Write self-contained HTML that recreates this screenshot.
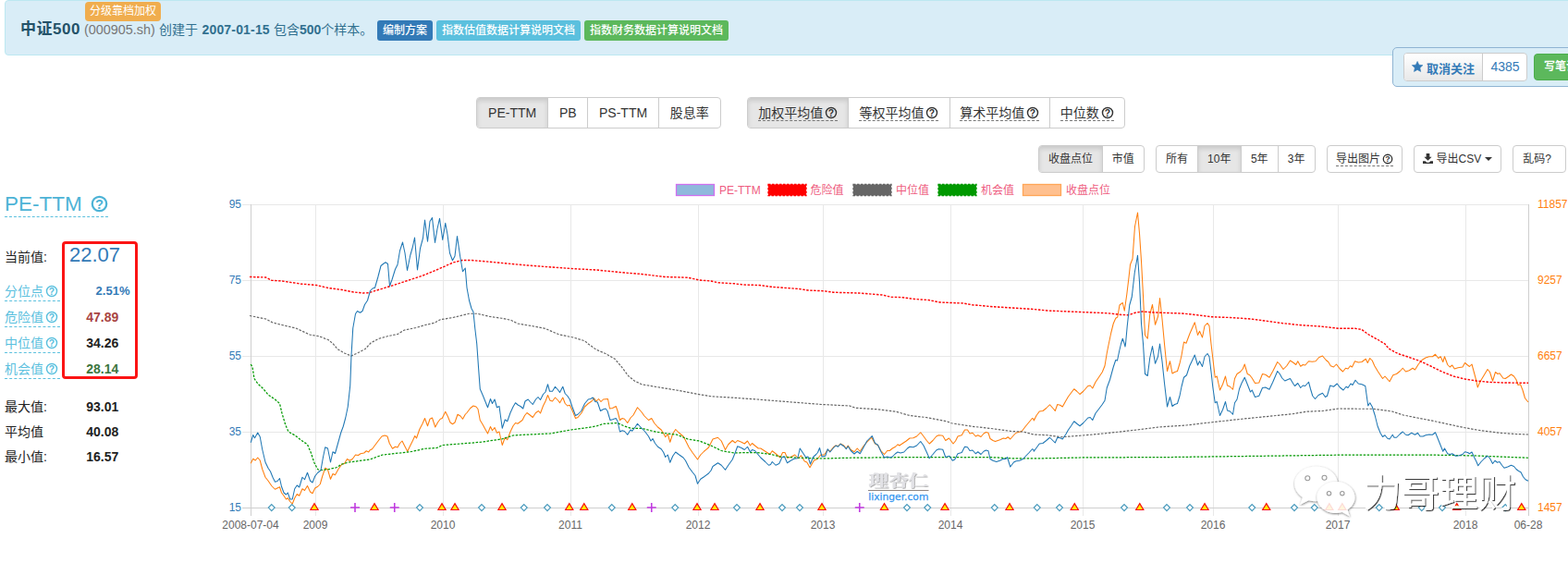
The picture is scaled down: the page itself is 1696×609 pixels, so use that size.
<!DOCTYPE html><html lang="zh"><head><meta charset="utf-8"><title>中证500 PE-TTM</title><style>
*{box-sizing:border-box;margin:0;padding:0}
html,body{width:1696px;height:609px;overflow:hidden;background:#fff}
body{font-family:"Liberation Sans","Noto Sans CJK SC",sans-serif;font-size:14px;color:#333;position:relative}
.abs{position:absolute;white-space:nowrap}
#hdr{left:5px;top:0px;width:1720px;height:60px;background:#d9edf7;border:1px solid #bce8f1;border-radius:4px}
.lbl{position:absolute;height:22px;line-height:22.5px;border-radius:3px;color:#fff;font-weight:500;font-size:12px;text-align:center;white-space:nowrap;top:22px}
.t{position:absolute;white-space:nowrap;line-height:20px;top:22px;font-size:14px;color:#31708f}
.bg{position:absolute;display:flex;border:1px solid #ccc;border-radius:4px;background:#fff;overflow:hidden}
.bg div{height:100%;text-align:center;color:#333;border-right:1px solid #ccc;white-space:nowrap}
.bg div:last-child{border-right:none}
.bg div.on{background:#e6e6e6;box-shadow:inset 0 3px 5px rgba(0,0,0,.125)}
.big div{font-size:14px;line-height:32px}
.sm div{font-size:12px;line-height:28.6px}
.q{display:inline-block;vertical-align:-2px;margin-left:2px}
.du{border-bottom:1px dashed #777;padding-bottom:0px}
.row{position:absolute;left:5px;white-space:nowrap;font-size:14px;line-height:20px;color:#222}
.row.l{color:#5bc0de}
.val{position:absolute;white-space:nowrap;font-size:14px;line-height:20px;font-weight:bold;color:#222}
</style></head><body>
<div class="abs" id="hdr"></div>
<div class="lbl" style="left:92px;top:2px;width:82px;height:21px;line-height:20px;background:#f0ad4e;font-weight:normal;border-radius:4px">分级靠档加权</div>
<div class="t" style="left:22px;font-size:17px;font-weight:bold;color:#245269;top:22px;letter-spacing:0.5px">中证500</div>
<div class="t" style="left:91px;color:#777;font-size:14.4px">(000905.sh)</div>
<div class="t" style="left:172px">创建于</div>
<div class="t" style="left:218.5px;font-weight:bold;letter-spacing:0.17px">2007-01-15</div>
<div class="t" style="left:296px">包含<b>500</b>个样本。</div>
<div class="lbl" style="left:408px;width:60px;background:#337ab7">编制方案</div>
<div class="lbl" style="left:472px;width:156px;background:#5bc0de">指数估值数据计算说明文档</div>
<div class="lbl" style="left:632px;width:156px;background:#5cb85c">指数财务数据计算说明文档</div>
<div class="abs" style="left:1506px;top:51px;width:220px;height:43px;background:#d9edf7;border:1px solid #8fb4d3;border-radius:5px"></div>
<div class="abs" style="left:1518px;top:57px;width:134px;height:31px;border:1px solid #ccc;border-radius:4px;background:#fff;overflow:hidden"><div style="position:absolute;left:0;top:0;width:85px;height:100%;background:linear-gradient(#fff,#e8e8e8);border-right:1px solid #ccc"></div><svg style="position:absolute;left:7.900px;top:8px" width="12.200" height="12.200" viewBox="0 0 24 24"><path fill="#337ab7" stroke="#337ab7" stroke-width="1.200" stroke-linejoin="round" d="M12.00 0.80 L15.35 8.19 L23.41 9.09 L17.42 14.56 L19.05 22.51 L12.00 18.50 L4.95 22.51 L6.58 14.56 L0.59 9.09 L8.65 8.19z"/></svg><div style="position:absolute;left:24px;top:6.500px;line-height:20px;font-size:13px;font-weight:bold;color:#337ab7">取消关注</div><div style="position:absolute;left:85px;width:48px;top:4px;line-height:20px;font-size:14px;color:#337ab7;text-align:center">4385</div></div>
<div class="abs" style="left:1659px;top:58px;width:60px;height:29px;background:#5cb85c;border:1px solid #4cae4c;border-radius:4px;color:#fff;font-size:12px;font-weight:bold;line-height:27px;padding-left:10px">写笔记</div>
<div class="bg big" style="left:515.3px;top:105.0px;width:264.7px;height:34.0px"><div style="width:76.7px" class="on">PE-TTM</div><div style="width:43.5px" class="">PB</div><div style="width:76.2px" class="">PS-TTM</div><div style="width:66.3px" class="">股息率</div></div>
<div class="bg big" style="left:808.3px;top:105.0px;width:408.4px;height:34.0px"><div style="width:109.0px" class="on"><span class="du">加权平均值<svg class="q" width="14" height="14" viewBox="0 0 16 16"><circle cx="8" cy="8" r="6.3" fill="none" stroke="#333" stroke-width="1.65"/><text x="8" y="12.1" text-anchor="middle" font-family="Liberation Sans, sans-serif" font-weight="bold" font-size="11.8" fill="#333">?</text></svg></span></div><div style="width:109.4px" class=""><span class="du">等权平均值<svg class="q" width="14" height="14" viewBox="0 0 16 16"><circle cx="8" cy="8" r="6.3" fill="none" stroke="#333" stroke-width="1.65"/><text x="8" y="12.1" text-anchor="middle" font-family="Liberation Sans, sans-serif" font-weight="bold" font-size="11.8" fill="#333">?</text></svg></span></div><div style="width:108.0px" class=""><span class="du">算术平均值<svg class="q" width="14" height="14" viewBox="0 0 16 16"><circle cx="8" cy="8" r="6.3" fill="none" stroke="#333" stroke-width="1.65"/><text x="8" y="12.1" text-anchor="middle" font-family="Liberation Sans, sans-serif" font-weight="bold" font-size="11.8" fill="#333">?</text></svg></span></div><div style="width:80.0px" class=""><span class="du">中位数<svg class="q" width="14" height="14" viewBox="0 0 16 16"><circle cx="8" cy="8" r="6.3" fill="none" stroke="#333" stroke-width="1.65"/><text x="8" y="12.1" text-anchor="middle" font-family="Liberation Sans, sans-serif" font-weight="bold" font-size="11.8" fill="#333">?</text></svg></span></div></div>
<div class="bg sm" style="left:1123.3px;top:157.0px;width:114.5px;height:30.0px"><div style="width:68.5px" class="on">收盘点位</div><div style="width:44.0px" class="">市值</div></div>
<div class="bg sm" style="left:1250.3px;top:157.0px;width:172.5px;height:30.0px"><div style="width:44.3px" class="">所有</div><div style="width:47.4px" class="on">10年</div><div style="width:39.6px" class="">5年</div><div style="width:39.2px" class="">3年</div></div>
<div class="bg sm" style="left:1435.2px;top:157.0px;width:81.4px;height:30.0px"><div style="width:79.4px" class=""><span class="du">导出图片<svg class="q" width="12" height="12" viewBox="0 0 16 16"><circle cx="8" cy="8" r="6.3" fill="none" stroke="#333" stroke-width="1.75"/><text x="8" y="12.1" text-anchor="middle" font-family="Liberation Sans, sans-serif" font-weight="bold" font-size="11.8" fill="#333">?</text></svg></span></div></div>
<div class="bg sm" style="left:1529.0px;top:157.0px;width:94.7px;height:30.0px"><div style="width:92.7px" class=""><svg width="11" height="11" viewBox="0 0 12 12" style="vertical-align:-1px"><path fill="#333" d="M4 0h4v4h2.500L6 8.500 1.500 4H4zM0 9h3l1.500 1.500h3L9 9h3v3H0z"/></svg> 导出CSV <span style="display:inline-block;border-top:4px solid #333;border-left:4px solid transparent;border-right:4px solid transparent;vertical-align:2px"></span></div></div>
<div class="bg sm" style="left:1636.2px;top:157.0px;width:57.8px;height:30.0px"><div style="width:55.8px" class=""><span style="margin-left:-5px">乱码?</span></div></div>
<div class="abs" style="left:5px;top:207.5px;font-size:22.5px;line-height:26px;color:#4db3d6;border-bottom:1px dashed #5bc0de;width:112px">PE-TTM<svg class="q" style="vertical-align:-2.5px;margin-left:9px" width="19" height="19" viewBox="0 0 16 16"><circle cx="8" cy="8" r="6.500" fill="none" stroke="#4db3d6" stroke-width="1.900"/><text x="8" y="12.300" text-anchor="middle" font-family="Liberation Sans, sans-serif" font-weight="bold" font-size="12.400" fill="#4db3d6">?</text></svg></div>
<div class="abs" style="left:67px;top:261px;width:82px;height:148.5px;border:3px solid #fb1414;border-radius:4px"></div>
<div class="row" style="top:268px">当前值:</div>
<div class="val" style="left:75px;top:263px;font-size:22px;font-weight:normal;color:#337ab7;line-height:26px">22.07</div>
<div class="row l" style="top:305px;border-bottom:1px dashed #5bc0de;width:60px;height:21px">分位点<svg class="q" width="14" height="14" viewBox="0 0 16 16"><circle cx="8" cy="8" r="6.3" fill="none" stroke="#5bc0de" stroke-width="1.65"/><text x="8" y="12.1" text-anchor="middle" font-family="Liberation Sans, sans-serif" font-weight="bold" font-size="11.8" fill="#5bc0de">?</text></svg></div>
<div class="val" style="left:103.6px;top:305px;color:#337ab7;font-size:13px">2.51%</div>
<div class="row l" style="top:333px;border-bottom:1px dashed #5bc0de;width:60px;height:21px">危险值<svg class="q" width="14" height="14" viewBox="0 0 16 16"><circle cx="8" cy="8" r="6.3" fill="none" stroke="#5bc0de" stroke-width="1.65"/><text x="8" y="12.1" text-anchor="middle" font-family="Liberation Sans, sans-serif" font-weight="bold" font-size="11.8" fill="#5bc0de">?</text></svg></div>
<div class="val" style="left:93.3px;top:333px;color:#a94442">47.89</div>
<div class="row l" style="top:361px;border-bottom:1px dashed #5bc0de;width:60px;height:21px">中位值<svg class="q" width="14" height="14" viewBox="0 0 16 16"><circle cx="8" cy="8" r="6.3" fill="none" stroke="#5bc0de" stroke-width="1.65"/><text x="8" y="12.1" text-anchor="middle" font-family="Liberation Sans, sans-serif" font-weight="bold" font-size="11.8" fill="#5bc0de">?</text></svg></div>
<div class="val" style="left:93.3px;top:361px;color:#222">34.26</div>
<div class="row l" style="top:389px;border-bottom:1px dashed #5bc0de;width:60px;height:21px">机会值<svg class="q" width="14" height="14" viewBox="0 0 16 16"><circle cx="8" cy="8" r="6.3" fill="none" stroke="#5bc0de" stroke-width="1.65"/><text x="8" y="12.1" text-anchor="middle" font-family="Liberation Sans, sans-serif" font-weight="bold" font-size="11.8" fill="#5bc0de">?</text></svg></div>
<div class="val" style="left:93.3px;top:389px;color:#3c763d">28.14</div>
<div class="row" style="top:430px">最大值:</div>
<div class="val" style="left:93.3px;top:430px">93.01</div>
<div class="row" style="top:457px">平均值</div>
<div class="val" style="left:93.3px;top:457px">40.08</div>
<div class="row" style="top:484px">最小值:</div>
<div class="val" style="left:93.3px;top:484px">16.57</div>
<svg class="abs" style="left:0;top:0" width="1696" height="609" viewBox="0 0 1696 609" font-family="Liberation Sans, Noto Sans CJK SC, sans-serif" font-size="12">
<rect x="731.5" y="199.5" width="41" height="12" fill="#8fb9dc" stroke="#d070f0" stroke-width="1.3"/>
<text x="778" y="209.5" fill="#ee5c80">PE-TTM</text>
<rect x="831" y="199.5" width="41" height="12" fill="#ff0000" stroke="#ff0000" stroke-width="1.3" stroke-dasharray="2.5 1.5"/>
<text x="876.5" y="209.5" fill="#ee5c80">危险值</text>
<rect x="923" y="199.5" width="41" height="12" fill="#666666" stroke="#666666" stroke-width="1.3" stroke-dasharray="2.5 1.5"/>
<text x="969" y="209.5" fill="#ee5c80">中位值</text>
<rect x="1015" y="199.5" width="41" height="12" fill="#009900" stroke="#009900" stroke-width="1.3" stroke-dasharray="2.5 1.5"/>
<text x="1061" y="209.5" fill="#ee5c80">机会值</text>
<rect x="1106.5" y="199.5" width="41" height="12" fill="#ffc08f" stroke="#ffa657" stroke-width="1.3"/>
<text x="1153" y="209.5" fill="#ee5c80">收盘点位</text>
<line x1="341.5" y1="221" x2="341.5" y2="558" stroke="#e8e8e8" stroke-width="1"/>
<line x1="479.5" y1="221" x2="479.5" y2="558" stroke="#e8e8e8" stroke-width="1"/>
<line x1="617.5" y1="221" x2="617.5" y2="558" stroke="#e8e8e8" stroke-width="1"/>
<line x1="755.5" y1="221" x2="755.5" y2="558" stroke="#e8e8e8" stroke-width="1"/>
<line x1="890.5" y1="221" x2="890.5" y2="558" stroke="#e8e8e8" stroke-width="1"/>
<line x1="1028.5" y1="221" x2="1028.5" y2="558" stroke="#e8e8e8" stroke-width="1"/>
<line x1="1171.5" y1="221" x2="1171.5" y2="558" stroke="#e8e8e8" stroke-width="1"/>
<line x1="1312.5" y1="221" x2="1312.5" y2="558" stroke="#e8e8e8" stroke-width="1"/>
<line x1="1447.5" y1="221" x2="1447.5" y2="558" stroke="#e8e8e8" stroke-width="1"/>
<line x1="1585.5" y1="221" x2="1585.5" y2="558" stroke="#e8e8e8" stroke-width="1"/>
<line x1="262" y1="221.5" x2="1653" y2="221.5" stroke="#e8e8e8" stroke-width="1"/>
<line x1="262" y1="303.5" x2="1653" y2="303.5" stroke="#e8e8e8" stroke-width="1"/>
<line x1="262" y1="385.5" x2="1653" y2="385.5" stroke="#e8e8e8" stroke-width="1"/>
<line x1="262" y1="467.5" x2="1653" y2="467.5" stroke="#e8e8e8" stroke-width="1"/>
<line x1="262" y1="549.5" x2="1653" y2="549.5" stroke="#e8e8e8" stroke-width="1"/>
<line x1="271.5" y1="221" x2="271.5" y2="558" stroke="#cfcfcf" stroke-width="1"/>
<line x1="262" y1="549.5" x2="1653" y2="549.5" stroke="#cfcfcf" stroke-width="1"/>
<line x1="1653.5" y1="221" x2="1653.5" y2="558" stroke="#cfcfcf" stroke-width="1"/>
<text x="261" y="225" text-anchor="end" fill="#337ab7">95</text>
<text x="1663" y="225" fill="#ff7f0e">11857</text>
<text x="261" y="307" text-anchor="end" fill="#337ab7">75</text>
<text x="1663" y="307" fill="#ff7f0e">9257</text>
<text x="261" y="389" text-anchor="end" fill="#337ab7">55</text>
<text x="1663" y="389" fill="#ff7f0e">6657</text>
<text x="261" y="471" text-anchor="end" fill="#337ab7">35</text>
<text x="1663" y="471" fill="#ff7f0e">4057</text>
<text x="261" y="553" text-anchor="end" fill="#337ab7">15</text>
<text x="1663" y="553" fill="#ff7f0e">1457</text>
<text x="271" y="571.5" text-anchor="middle" fill="#666">2008-07-04</text>
<text x="341" y="571.5" text-anchor="middle" fill="#666">2009</text>
<text x="479" y="571.5" text-anchor="middle" fill="#666">2010</text>
<text x="617" y="571.5" text-anchor="middle" fill="#666">2011</text>
<text x="755" y="571.5" text-anchor="middle" fill="#666">2012</text>
<text x="890" y="571.5" text-anchor="middle" fill="#666">2013</text>
<text x="1028" y="571.5" text-anchor="middle" fill="#666">2014</text>
<text x="1171" y="571.5" text-anchor="middle" fill="#666">2015</text>
<text x="1312" y="571.5" text-anchor="middle" fill="#666">2016</text>
<text x="1447" y="571.5" text-anchor="middle" fill="#666">2017</text>
<text x="1585" y="571.5" text-anchor="middle" fill="#666">2018</text>
<text x="1653" y="571.5" text-anchor="middle" fill="#666">06-28</text>
<path d="M271.25 501.25 L273.75 496.25 L276.25 498.00 L278.75 495.00 L281.25 498.00 L283.75 507.50 L287.00 516.25 L290.00 520.00 L293.75 525.50 L297.50 529.25 L300.00 528.00 L302.50 526.75 L304.50 533.00 L307.00 536.25 L309.50 540.00 L311.25 538.75 L313.75 542.50 L316.25 545.00 L318.75 538.75 L321.25 534.50 L323.75 536.25 L327.00 528.75 L329.50 530.50 L332.50 525.50 L335.50 532.00 L338.00 533.75 L340.75 528.00 L343.75 526.25 L346.25 523.75 L348.75 515.00 L351.75 506.25 L354.50 508.00 L357.50 518.25 L360.00 512.50 L362.50 513.75 L366.25 507.00 L370.00 502.00 L372.50 501.50 L375.50 496.50 L378.25 498.25 L381.25 496.50 L384.50 492.00 L387.50 492.50 L390.00 490.75 L393.75 490.00 L396.25 487.75 L398.75 489.00 L400.00 487.00 L402.50 485.75 L406.25 480.75 L410.00 475.75 L413.00 472.00 L416.25 471.00 L419.00 472.00 L421.25 479.50 L424.50 485.25 L427.50 483.25 L430.00 484.00 L432.50 479.50 L435.00 477.00 L437.50 482.00 L440.75 488.25 L443.75 482.00 L446.25 477.00 L448.75 471.50 L450.50 474.00 L453.75 464.50 L457.00 458.25 L459.50 452.50 L462.50 460.75 L465.00 453.25 L467.50 452.00 L470.75 462.00 L473.75 456.50 L476.25 453.25 L478.25 452.50 L481.75 445.25 L484.50 450.75 L487.00 457.00 L489.50 458.75 L492.00 457.00 L495.00 448.25 L498.00 450.00 L500.50 453.25 L503.25 448.25 L505.00 446.50 L508.75 441.50 L512.00 439.00 L515.00 440.00 L517.00 442.50 L519.25 454.50 L522.00 459.00 L525.00 464.50 L527.50 469.00 L530.50 461.50 L532.50 465.75 L535.00 462.50 L537.50 468.25 L540.00 467.00 L543.25 481.50 L546.25 473.25 L548.75 475.75 L552.00 467.00 L555.00 460.75 L557.50 457.50 L560.00 458.25 L565.00 454.50 L567.50 449.50 L570.00 446.50 L573.25 449.00 L576.25 451.50 L579.50 446.50 L582.50 444.50 L584.50 447.00 L587.50 439.00 L590.00 434.00 L592.50 427.50 L595.00 433.25 L597.50 434.00 L600.50 430.00 L603.75 433.25 L605.50 435.75 L608.75 430.00 L611.25 436.50 L613.75 439.00 L616.25 438.25 L618.75 443.25 L622.50 452.50 L625.00 451.50 L628.75 447.00 L632.50 440.00 L636.25 436.50 L640.00 434.00 L642.50 430.75 L645.00 434.00 L647.50 431.50 L650.00 434.50 L652.50 432.00 L657.50 431.50 L659.50 442.00 L662.50 441.50 L666.25 439.50 L668.00 444.50 L670.50 454.50 L673.00 452.50 L675.50 453.25 L678.75 457.50 L682.00 452.00 L685.00 449.00 L689.50 440.75 L694.00 445.75 L697.00 450.00 L701.50 454.50 L704.75 452.50 L707.75 457.75 L711.50 462.00 L715.25 465.00 L717.75 469.00 L719.75 472.75 L722.25 469.50 L724.75 478.25 L727.75 469.00 L730.75 464.50 L734.00 467.75 L739.00 472.00 L741.50 476.50 L745.25 484.00 L749.00 489.50 L754.50 497.00 L757.75 492.00 L761.50 488.25 L766.50 484.00 L771.00 475.00 L776.50 473.25 L780.25 477.00 L784.50 486.50 L787.75 480.75 L792.25 476.50 L795.25 479.00 L797.75 476.50 L802.00 478.25 L805.25 480.00 L808.50 477.00 L811.50 482.00 L813.50 479.50 L816.50 482.00 L820.25 485.00 L822.75 485.00 L827.75 488.25 L832.75 491.50 L835.25 487.75 L839.00 490.75 L844.00 495.00 L846.50 489.50 L849.00 489.50 L851.50 495.25 L855.25 494.50 L859.75 492.00 L863.50 495.75 L866.50 492.75 L870.25 499.00 L872.75 500.00 L876.00 505.75 L880.25 498.25 L884.00 496.50 L887.75 492.00 L891.50 492.00 L895.25 486.50 L897.75 488.25 L901.50 483.75 L904.00 482.00 L906.50 482.50 L909.00 480.00 L912.75 482.00 L915.25 485.00 L917.25 482.00 L920.25 486.50 L924.00 488.75 L927.25 485.00 L930.25 488.25 L934.00 482.50 L937.75 478.25 L942.75 473.25 L946.50 480.00 L949.50 481.50 L952.75 487.50 L956.50 491.50 L959.75 487.50 L962.25 487.50 L965.25 485.00 L968.50 483.25 L971.00 480.75 L972.75 482.00 L976.50 479.50 L980.25 477.00 L984.00 474.00 L987.75 473.75 L991.50 472.00 L995.75 467.75 L999.00 472.00 L1002.25 476.50 L1005.25 480.00 L1009.00 476.50 L1012.75 472.00 L1015.25 470.75 L1019.75 471.25 L1022.75 476.50 L1026.50 474.00 L1031.00 480.00 L1033.50 477.00 L1036.00 472.00 L1040.25 470.75 L1043.50 465.00 L1046.50 465.00 L1049.00 469.00 L1052.00 468.25 L1055.25 472.00 L1057.75 470.75 L1061.00 472.50 L1064.00 469.00 L1066.50 467.50 L1069.00 468.25 L1071.00 474.50 L1074.00 476.50 L1076.50 477.50 L1081.50 475.75 L1085.25 474.00 L1087.75 474.50 L1090.25 472.75 L1092.75 475.00 L1096.50 470.75 L1099.00 468.25 L1105.25 466.50 L1109.00 461.50 L1112.75 457.00 L1116.50 452.50 L1118.00 453.25 L1118.25 455.00 L1121.00 449.50 L1124.25 445.00 L1128.00 444.50 L1131.75 441.50 L1135.50 437.75 L1139.25 442.00 L1141.25 444.50 L1143.75 437.50 L1146.75 438.25 L1149.25 440.00 L1153.00 433.25 L1155.50 429.00 L1158.50 425.00 L1161.75 420.75 L1164.75 423.25 L1168.00 426.50 L1171.75 423.25 L1176.75 417.50 L1179.25 417.00 L1181.75 420.00 L1185.00 413.25 L1189.25 407.00 L1192.25 402.50 L1195.00 395.75 L1197.25 382.00 L1199.25 372.00 L1201.75 360.00 L1204.25 350.00 L1206.75 344.25 L1208.75 343.00 L1211.00 330.00 L1214.25 327.50 L1216.25 336.25 L1218.75 318.75 L1221.00 300.00 L1222.50 286.25 L1225.00 280.00 L1227.50 245.00 L1230.50 230.00 L1232.50 252.50 L1234.50 282.50 L1236.50 320.00 L1238.50 362.50 L1241.25 366.25 L1243.75 340.00 L1246.50 329.50 L1249.50 351.25 L1252.50 342.50 L1254.50 322.50 L1257.00 345.00 L1259.50 372.00 L1261.00 387.00 L1262.50 401.50 L1265.50 390.75 L1268.00 404.00 L1270.50 402.50 L1273.50 401.50 L1276.00 393.25 L1278.00 384.50 L1280.50 370.00 L1283.00 371.25 L1286.75 361.25 L1289.50 355.00 L1292.25 348.75 L1295.50 362.50 L1297.50 358.25 L1300.50 365.00 L1303.00 352.50 L1306.00 349.50 L1308.00 352.50 L1310.00 372.00 L1311.75 387.00 L1314.25 408.25 L1316.25 407.00 L1319.50 422.00 L1322.50 415.75 L1325.50 407.00 L1327.50 417.00 L1330.50 418.25 L1333.50 421.25 L1335.50 409.50 L1338.00 404.50 L1341.75 402.00 L1344.25 399.00 L1346.25 394.00 L1349.25 404.50 L1351.75 405.75 L1354.25 409.00 L1357.50 414.50 L1361.75 414.00 L1365.50 404.50 L1368.75 405.25 L1373.00 408.25 L1376.75 401.50 L1381.75 391.50 L1384.25 394.00 L1388.00 399.50 L1391.75 395.75 L1395.50 390.00 L1399.25 392.50 L1401.75 394.50 L1403.75 390.75 L1406.75 396.25 L1409.25 394.50 L1411.75 395.00 L1415.50 390.75 L1419.25 391.25 L1423.00 390.75 L1426.75 386.50 L1430.50 385.00 L1434.25 389.50 L1436.75 391.50 L1439.25 395.75 L1442.50 397.00 L1445.50 394.00 L1449.25 399.00 L1452.50 402.00 L1455.50 398.25 L1458.00 399.00 L1460.50 395.75 L1462.50 397.00 L1465.50 390.75 L1469.25 392.00 L1473.00 391.50 L1477.25 388.25 L1479.25 392.50 L1481.75 387.50 L1484.25 390.00 L1486.75 395.75 L1490.50 402.00 L1495.50 409.50 L1498.00 407.00 L1503.00 412.75 L1506.75 405.75 L1510.50 404.50 L1514.25 401.50 L1517.25 398.25 L1520.50 402.00 L1524.25 400.75 L1528.00 398.25 L1530.50 400.00 L1534.25 394.00 L1538.00 389.50 L1542.00 387.00 L1545.75 385.75 L1549.50 385.75 L1552.50 383.25 L1555.75 387.50 L1558.25 385.75 L1560.75 391.50 L1562.50 385.75 L1565.75 394.50 L1568.25 397.00 L1570.75 395.00 L1573.25 399.00 L1577.00 397.75 L1582.00 397.00 L1584.50 392.50 L1587.50 395.00 L1589.50 396.50 L1592.00 394.00 L1594.50 403.25 L1596.50 410.75 L1598.25 419.00 L1600.75 413.25 L1604.50 407.00 L1609.00 399.50 L1611.50 402.50 L1614.50 412.00 L1617.50 402.50 L1620.00 404.50 L1622.00 403.75 L1625.75 409.00 L1628.25 409.50 L1632.00 407.00 L1634.50 405.00 L1637.50 407.00 L1640.00 410.75 L1642.00 416.50 L1644.50 415.75 L1647.00 422.00 L1649.50 430.75 L1653.00 435.00" fill="none" stroke="#ff7f0e" stroke-width="1.05" stroke-linejoin="round"/>
<path d="M271.25 394.00 L273.00 397.00 L275.00 409.50 L278.75 415.00 L285.00 420.75 L290.00 427.00 L297.50 432.00 L302.50 436.50 L305.00 447.00 L308.75 459.50 L312.00 467.00 L318.75 470.75 L326.25 476.50 L332.50 480.75 L336.25 489.50 L340.00 500.75 L343.75 507.75 L347.50 508.50 L356.25 507.50 L363.75 505.75 L370.00 502.00 L377.50 500.00 L400.00 497.00 L413.75 492.00 L432.50 490.00 L445.00 488.50 L460.00 485.25 L472.50 484.50 L478.75 481.50 L495.00 480.25 L520.00 478.25 L542.50 475.00 L555.00 471.00 L572.50 470.00 L595.00 469.00 L617.50 465.00 L632.50 463.00 L645.00 461.00 L652.50 458.50 L667.50 457.50 L675.00 460.75 L682.50 463.25 L694.00 463.25 L706.50 466.50 L719.00 468.75 L731.50 470.00 L744.00 475.00 L756.50 477.00 L769.00 482.00 L780.25 487.50 L794.00 490.00 L806.50 489.50 L819.00 489.50 L834.00 491.50 L844.00 494.00 L864.00 495.25 L889.00 496.00 L919.00 495.25 L944.00 495.00 L994.00 494.50 L1044.00 494.75 L1069.00 494.50 L1094.00 495.75 L1118.00 496.00 L1168.00 495.00 L1268.00 494.50 L1368.00 493.25 L1443.00 492.25 L1542.00 492.00 L1572.00 492.50 L1597.00 493.00 L1622.00 494.00 L1653.00 495.25" fill="none" stroke="#009900" stroke-width="1.25" stroke-linejoin="round" stroke-dasharray="2.5 1.5"/>
<path d="M270.00 341.50 L287.50 345.00 L295.00 349.00 L305.00 351.50 L320.00 355.00 L335.00 362.00 L345.00 363.75 L355.00 367.50 L360.00 371.50 L365.00 377.50 L372.50 382.00 L380.00 385.00 L387.50 381.50 L395.00 377.50 L401.25 370.75 L410.00 366.25 L420.00 363.50 L430.00 361.50 L437.50 357.00 L450.00 354.50 L460.00 351.50 L470.00 349.25 L476.25 345.75 L490.00 343.50 L500.00 341.00 L507.50 339.25 L516.25 339.25 L530.00 342.50 L542.50 344.25 L552.50 346.25 L560.00 350.00 L577.50 353.00 L590.00 355.50 L605.00 362.00 L620.00 365.00 L632.50 368.75 L636.25 372.00 L645.00 378.25 L655.00 382.50 L665.00 388.25 L672.50 397.00 L680.00 407.00 L686.25 412.00 L694.00 415.75 L711.50 418.75 L731.50 422.00 L754.00 426.25 L769.00 428.75 L794.00 430.25 L819.00 432.00 L856.50 435.00 L889.00 437.50 L919.00 439.00 L925.25 441.25 L949.00 442.75 L969.00 445.25 L984.00 449.50 L1001.50 451.50 L1024.00 455.75 L1029.00 457.75 L1051.50 461.25 L1074.00 463.75 L1094.00 466.50 L1106.50 467.00 L1118.00 470.00 L1133.00 470.75 L1148.00 472.75 L1168.00 471.25 L1193.00 469.00 L1223.00 465.75 L1253.00 462.00 L1283.00 460.00 L1313.00 456.50 L1343.00 453.25 L1373.00 450.25 L1398.00 447.75 L1413.00 445.25 L1430.50 444.50 L1448.00 442.00 L1468.00 442.25 L1485.50 442.25 L1505.50 445.00 L1518.00 449.00 L1533.00 452.00 L1542.00 453.75 L1552.00 455.75 L1567.00 459.00 L1584.50 462.75 L1602.00 465.75 L1622.00 468.25 L1639.50 469.50 L1653.00 470.00" fill="none" stroke="#666666" stroke-width="1.2" stroke-linejoin="round" stroke-dasharray="2.5 1.5"/>
<path d="M270.00 299.50 L287.50 300.00 L293.75 303.25 L305.00 304.00 L325.00 307.00 L342.50 308.50 L355.00 311.50 L370.00 313.50 L382.50 316.00 L392.50 317.00 L398.75 316.75 L410.00 313.25 L422.50 309.50 L440.00 303.75 L457.50 298.00 L475.00 290.75 L490.00 284.00 L500.00 281.50 L510.00 281.50 L532.50 283.50 L570.00 287.00 L617.50 290.50 L645.00 292.00 L670.00 294.50 L694.00 296.50 L719.00 299.50 L744.00 300.25 L756.50 303.00 L769.00 304.00 L776.50 305.75 L794.00 306.75 L804.00 308.00 L821.50 308.50 L834.00 310.25 L864.00 312.50 L874.00 314.00 L891.50 314.75 L901.50 316.25 L929.00 317.00 L954.00 319.00 L964.00 321.25 L976.50 321.75 L989.00 323.50 L1004.00 324.50 L1016.50 327.00 L1041.50 328.00 L1051.50 329.75 L1074.00 331.75 L1094.00 333.00 L1118.00 334.50 L1133.00 336.00 L1168.00 337.50 L1198.00 338.75 L1213.00 340.50 L1220.50 340.75 L1228.00 338.25 L1235.50 337.00 L1248.00 338.00 L1278.00 339.00 L1293.00 340.50 L1310.50 342.75 L1330.50 343.50 L1353.00 345.00 L1368.00 347.00 L1388.00 349.75 L1408.00 351.75 L1428.00 353.00 L1448.00 355.25 L1465.50 355.25 L1473.00 356.50 L1480.50 362.00 L1490.50 367.50 L1498.00 372.00 L1502.00 377.00 L1512.00 382.50 L1522.00 385.75 L1534.50 390.00 L1547.00 395.75 L1559.50 402.00 L1572.00 407.00 L1584.50 410.00 L1597.00 412.00 L1609.50 413.25 L1627.00 414.00 L1653.00 414.25" fill="none" stroke="#ff0000" stroke-width="1.4" stroke-linejoin="round" stroke-dasharray="2.5 1.5"/>
<path d="M271.25 478.75 L273.75 470.50 L275.50 473.75 L278.75 468.00 L281.25 472.50 L283.75 486.25 L287.00 500.00 L290.00 506.25 L292.50 510.00 L295.00 516.25 L297.50 521.25 L300.00 520.50 L302.50 517.50 L304.50 526.25 L307.00 533.00 L309.50 535.00 L311.25 533.00 L313.75 540.00 L316.25 540.00 L318.75 528.75 L321.25 525.00 L323.75 527.00 L327.00 516.25 L329.50 518.75 L332.50 511.25 L335.50 520.00 L338.00 522.00 L340.75 515.00 L343.75 511.25 L347.00 508.75 L349.50 494.50 L351.75 483.75 L354.50 485.00 L357.50 500.00 L360.00 488.75 L362.50 490.50 L366.25 477.00 L368.75 468.00 L371.25 461.25 L373.75 452.00 L376.25 440.00 L378.75 417.00 L380.00 384.50 L380.75 372.00 L381.75 355.00 L384.50 339.50 L386.50 336.50 L389.50 338.25 L392.00 336.50 L394.50 329.50 L397.50 325.00 L400.50 314.50 L403.00 312.00 L405.50 311.25 L408.75 300.00 L412.00 287.50 L414.50 285.50 L417.00 283.75 L419.50 285.50 L421.50 309.50 L424.00 302.50 L427.50 291.25 L430.00 286.25 L432.50 271.25 L435.50 262.00 L438.00 273.75 L440.50 292.50 L443.75 276.25 L446.25 267.50 L448.50 257.00 L451.50 292.00 L454.50 268.75 L457.50 257.50 L459.50 238.00 L462.50 261.25 L465.00 239.50 L467.50 235.50 L470.50 262.50 L473.00 247.50 L475.50 236.25 L478.75 259.50 L481.75 241.25 L484.00 253.75 L486.50 273.75 L489.50 281.75 L492.00 277.00 L494.50 255.50 L497.50 276.25 L500.50 293.75 L503.25 290.00 L505.00 311.25 L507.50 325.00 L510.00 333.75 L512.00 337.50 L513.75 355.00 L515.75 372.00 L517.50 397.00 L519.25 420.75 L522.50 428.25 L525.00 434.50 L527.50 440.75 L530.50 431.50 L532.50 436.50 L535.00 432.00 L537.50 440.75 L540.00 439.50 L543.25 463.25 L546.25 454.00 L548.75 455.75 L552.00 446.50 L555.00 440.00 L557.50 435.75 L560.50 438.25 L563.00 439.50 L565.75 442.00 L568.00 434.00 L571.25 432.00 L573.25 434.50 L576.25 437.50 L579.50 432.00 L582.00 429.50 L584.50 432.50 L587.50 426.50 L590.00 424.00 L592.50 415.75 L594.50 423.25 L597.50 423.25 L600.50 418.25 L603.75 422.00 L605.50 424.50 L608.75 418.25 L611.25 425.75 L613.75 428.25 L616.25 432.00 L618.75 439.50 L622.50 449.50 L625.00 448.25 L628.75 444.50 L632.50 436.50 L636.25 432.00 L638.75 431.50 L641.25 430.00 L643.75 434.50 L646.25 435.00 L649.50 444.50 L652.50 442.75 L655.00 442.00 L657.00 444.50 L660.00 454.50 L662.50 453.75 L666.25 452.50 L668.00 455.75 L670.50 467.00 L673.00 465.75 L675.50 466.50 L678.75 470.25 L682.00 465.00 L683.75 466.25 L687.00 462.00 L689.50 458.25 L694.00 463.25 L697.75 467.00 L701.50 472.00 L704.00 477.00 L706.00 474.50 L708.50 479.50 L711.50 483.25 L715.25 485.75 L717.75 489.50 L719.75 494.50 L722.25 492.00 L724.75 500.25 L727.75 493.25 L730.75 489.00 L734.00 491.50 L739.00 495.00 L741.50 498.25 L745.25 505.75 L749.00 510.75 L752.00 514.50 L754.50 523.25 L757.75 518.25 L761.50 515.75 L766.50 512.00 L769.00 509.00 L771.00 504.50 L776.50 500.75 L780.25 503.25 L784.50 508.25 L787.75 503.25 L792.25 497.00 L795.25 489.50 L797.75 482.75 L802.00 484.50 L805.25 486.50 L808.50 483.25 L811.50 489.00 L813.50 486.50 L816.50 487.50 L820.25 492.00 L822.75 495.00 L827.75 499.50 L831.50 503.25 L833.50 502.50 L835.25 499.50 L839.00 503.25 L842.75 501.50 L846.00 494.50 L848.50 494.00 L851.50 500.75 L855.25 498.25 L859.00 496.25 L862.75 495.75 L865.25 485.00 L869.00 490.75 L871.50 494.50 L874.00 494.00 L876.50 502.00 L879.50 494.50 L882.75 491.50 L884.50 489.50 L886.50 484.50 L889.00 494.00 L892.75 493.25 L895.25 485.75 L897.75 489.00 L901.50 484.50 L904.00 482.00 L906.50 483.25 L909.00 480.25 L912.75 482.75 L915.25 485.75 L917.25 482.75 L920.25 487.50 L924.00 491.00 L927.25 488.25 L930.25 490.75 L934.00 484.00 L937.75 477.00 L943.25 471.50 L946.50 479.50 L949.50 481.25 L952.75 488.25 L956.50 495.00 L959.75 494.00 L962.75 495.00 L965.25 494.00 L968.50 490.75 L971.00 489.00 L974.00 490.00 L977.75 489.00 L981.50 485.00 L984.00 483.25 L987.75 483.75 L991.50 482.00 L995.75 477.50 L999.00 482.00 L1002.25 489.00 L1005.25 495.75 L1009.00 491.50 L1012.75 487.00 L1015.25 485.75 L1019.75 486.25 L1022.75 494.50 L1027.00 493.25 L1030.25 498.25 L1032.75 497.00 L1036.00 490.75 L1040.25 489.50 L1043.50 483.25 L1046.50 483.75 L1049.00 487.50 L1052.00 487.00 L1055.25 490.75 L1057.75 488.75 L1061.00 491.50 L1064.00 488.25 L1066.50 487.00 L1069.00 487.75 L1071.00 496.50 L1074.00 498.25 L1077.75 499.50 L1081.50 498.25 L1085.25 496.25 L1087.75 496.50 L1089.50 494.50 L1092.75 505.00 L1096.50 500.00 L1099.00 498.75 L1102.75 498.25 L1106.50 496.50 L1110.25 492.50 L1112.75 490.00 L1116.50 485.75 L1118.00 486.50 L1118.25 488.25 L1121.00 484.50 L1124.25 480.00 L1128.00 479.50 L1131.75 476.50 L1135.50 473.25 L1139.25 477.00 L1141.25 479.00 L1143.75 473.25 L1146.75 473.75 L1149.25 475.00 L1153.00 469.50 L1155.50 465.00 L1158.50 460.75 L1161.75 455.75 L1164.75 458.25 L1168.00 460.75 L1171.75 457.50 L1176.75 452.00 L1179.25 451.50 L1181.75 454.50 L1185.00 447.00 L1189.25 441.50 L1192.25 437.50 L1195.00 433.25 L1197.25 419.50 L1200.50 410.75 L1204.25 397.00 L1206.75 389.50 L1208.50 390.00 L1211.00 378.25 L1212.50 372.00 L1214.25 366.25 L1216.25 372.00 L1217.00 375.00 L1217.50 372.00 L1219.25 352.50 L1221.75 330.00 L1224.25 321.25 L1227.25 295.00 L1230.50 276.25 L1232.50 305.00 L1234.50 350.00 L1236.50 372.00 L1238.50 404.50 L1241.25 406.50 L1243.75 387.00 L1246.50 374.50 L1249.50 393.25 L1252.50 385.75 L1254.50 372.00 L1257.00 390.75 L1259.50 414.50 L1262.50 440.00 L1265.50 429.50 L1268.00 439.50 L1270.50 437.50 L1273.50 436.50 L1276.00 428.25 L1278.00 418.25 L1280.50 408.25 L1283.50 405.75 L1286.75 395.75 L1289.50 390.00 L1292.25 384.00 L1295.50 395.00 L1297.50 390.75 L1300.50 396.50 L1303.00 385.75 L1306.00 382.50 L1308.00 385.75 L1310.00 402.00 L1311.75 418.25 L1314.25 435.75 L1316.25 434.50 L1319.50 449.50 L1322.50 443.25 L1325.50 434.50 L1327.50 444.00 L1330.50 445.00 L1333.50 448.25 L1335.50 435.75 L1338.00 432.00 L1340.50 420.75 L1343.00 414.50 L1346.25 408.25 L1349.25 415.75 L1352.50 424.00 L1354.25 422.00 L1357.50 429.50 L1361.75 428.25 L1365.50 419.50 L1368.75 419.00 L1373.00 421.25 L1376.75 413.25 L1381.75 401.50 L1384.25 404.50 L1386.75 409.00 L1389.75 412.00 L1392.50 410.75 L1395.50 409.50 L1399.25 415.75 L1400.50 417.50 L1403.75 414.50 L1406.75 419.50 L1409.25 417.00 L1411.75 417.50 L1415.50 413.25 L1417.50 420.75 L1419.75 428.25 L1422.50 431.50 L1426.00 427.50 L1430.50 425.25 L1433.50 429.50 L1435.50 428.25 L1438.75 417.00 L1442.50 418.25 L1446.25 415.00 L1449.25 419.00 L1453.00 422.00 L1456.00 418.25 L1458.00 419.50 L1461.00 415.00 L1463.00 416.50 L1466.00 411.25 L1469.25 415.00 L1473.00 415.75 L1476.75 417.50 L1478.75 432.00 L1479.75 439.00 L1481.75 435.75 L1484.25 440.00 L1487.25 449.50 L1490.00 460.75 L1493.00 468.25 L1495.50 472.50 L1498.00 470.75 L1500.50 474.00 L1503.00 475.00 L1506.25 470.25 L1508.00 473.25 L1510.50 473.25 L1514.25 469.50 L1517.25 467.00 L1520.50 470.25 L1523.00 470.75 L1526.75 468.25 L1530.50 470.25 L1533.50 468.25 L1536.00 472.00 L1539.25 472.00 L1542.00 470.75 L1545.75 470.00 L1549.50 470.25 L1552.50 467.75 L1555.75 475.75 L1558.25 482.00 L1560.75 488.25 L1562.50 485.00 L1565.75 490.75 L1568.25 491.50 L1570.75 490.75 L1574.50 493.25 L1578.25 492.75 L1582.00 491.50 L1584.50 488.75 L1587.50 489.50 L1589.50 490.75 L1592.00 489.00 L1594.50 494.50 L1597.00 499.50 L1598.75 503.75 L1602.00 499.50 L1605.75 495.75 L1609.00 493.25 L1611.50 495.75 L1614.50 501.50 L1617.00 498.25 L1619.50 500.25 L1622.00 499.50 L1624.50 503.25 L1627.00 506.25 L1630.75 505.00 L1634.50 503.25 L1637.50 504.50 L1640.00 507.50 L1642.50 509.50 L1645.00 510.75 L1647.50 515.75 L1650.00 518.75 L1653.00 520.25" fill="none" stroke="#1f77b4" stroke-width="1.05" stroke-linejoin="round"/>
<path d="M293.75 545.6 l3.4 3.5 l-3.4 3.5 l-3.4 -3.5z" fill="#fff" stroke="#4a9bbd" stroke-width="1.25"/>
<path d="M315.75 545.6 l3.4 3.5 l-3.4 3.5 l-3.4 -3.5z" fill="#fff" stroke="#4a9bbd" stroke-width="1.25"/>
<path d="M454.00 545.6 l3.4 3.5 l-3.4 3.5 l-3.4 -3.5z" fill="#fff" stroke="#4a9bbd" stroke-width="1.25"/>
<path d="M521.00 545.6 l3.4 3.5 l-3.4 3.5 l-3.4 -3.5z" fill="#fff" stroke="#4a9bbd" stroke-width="1.25"/>
<path d="M566.75 545.6 l3.4 3.5 l-3.4 3.5 l-3.4 -3.5z" fill="#fff" stroke="#4a9bbd" stroke-width="1.25"/>
<path d="M592.00 545.6 l3.4 3.5 l-3.4 3.5 l-3.4 -3.5z" fill="#fff" stroke="#4a9bbd" stroke-width="1.25"/>
<path d="M661.75 545.6 l3.4 3.5 l-3.4 3.5 l-3.4 -3.5z" fill="#fff" stroke="#4a9bbd" stroke-width="1.25"/>
<path d="M730.25 545.6 l3.4 3.5 l-3.4 3.5 l-3.4 -3.5z" fill="#fff" stroke="#4a9bbd" stroke-width="1.25"/>
<path d="M797.00 545.6 l3.4 3.5 l-3.4 3.5 l-3.4 -3.5z" fill="#fff" stroke="#4a9bbd" stroke-width="1.25"/>
<path d="M846.00 545.6 l3.4 3.5 l-3.4 3.5 l-3.4 -3.5z" fill="#fff" stroke="#4a9bbd" stroke-width="1.25"/>
<path d="M865.00 545.6 l3.4 3.5 l-3.4 3.5 l-3.4 -3.5z" fill="#fff" stroke="#4a9bbd" stroke-width="1.25"/>
<path d="M981.00 545.6 l3.4 3.5 l-3.4 3.5 l-3.4 -3.5z" fill="#fff" stroke="#4a9bbd" stroke-width="1.25"/>
<path d="M1003.25 545.6 l3.4 3.5 l-3.4 3.5 l-3.4 -3.5z" fill="#fff" stroke="#4a9bbd" stroke-width="1.25"/>
<path d="M1075.75 545.6 l3.4 3.5 l-3.4 3.5 l-3.4 -3.5z" fill="#fff" stroke="#4a9bbd" stroke-width="1.25"/>
<path d="M1121.75 545.6 l3.4 3.5 l-3.4 3.5 l-3.4 -3.5z" fill="#fff" stroke="#4a9bbd" stroke-width="1.25"/>
<path d="M1146.00 545.6 l3.4 3.5 l-3.4 3.5 l-3.4 -3.5z" fill="#fff" stroke="#4a9bbd" stroke-width="1.25"/>
<path d="M1216.00 545.6 l3.4 3.5 l-3.4 3.5 l-3.4 -3.5z" fill="#fff" stroke="#4a9bbd" stroke-width="1.25"/>
<path d="M1262.00 545.6 l3.4 3.5 l-3.4 3.5 l-3.4 -3.5z" fill="#fff" stroke="#4a9bbd" stroke-width="1.25"/>
<path d="M1287.00 545.6 l3.4 3.5 l-3.4 3.5 l-3.4 -3.5z" fill="#fff" stroke="#4a9bbd" stroke-width="1.25"/>
<path d="M1354.25 545.6 l3.4 3.5 l-3.4 3.5 l-3.4 -3.5z" fill="#fff" stroke="#4a9bbd" stroke-width="1.25"/>
<path d="M1400.00 545.6 l3.4 3.5 l-3.4 3.5 l-3.4 -3.5z" fill="#fff" stroke="#4a9bbd" stroke-width="1.25"/>
<path d="M1421.75 545.6 l3.4 3.5 l-3.4 3.5 l-3.4 -3.5z" fill="#fff" stroke="#4a9bbd" stroke-width="1.25"/>
<path d="M1491.75 545.6 l3.4 3.5 l-3.4 3.5 l-3.4 -3.5z" fill="#fff" stroke="#4a9bbd" stroke-width="1.25"/>
<path d="M1537.75 545.6 l3.4 3.5 l-3.4 3.5 l-3.4 -3.5z" fill="#fff" stroke="#4a9bbd" stroke-width="1.25"/>
<path d="M1560.00 545.6 l3.4 3.5 l-3.4 3.5 l-3.4 -3.5z" fill="#fff" stroke="#4a9bbd" stroke-width="1.25"/>
<path d="M1628.25 545.6 l3.4 3.5 l-3.4 3.5 l-3.4 -3.5z" fill="#fff" stroke="#4a9bbd" stroke-width="1.25"/>
<path d="M384.00 544 v10 M379.00 549 h10" fill="none" stroke="#c13be0" stroke-width="1.6"/>
<path d="M426.75 544 v10 M421.75 549 h10" fill="none" stroke="#c13be0" stroke-width="1.6"/>
<path d="M704.75 544 v10 M699.75 549 h10" fill="none" stroke="#c13be0" stroke-width="1.6"/>
<path d="M929.75 544 v10 M924.75 549 h10" fill="none" stroke="#c13be0" stroke-width="1.6"/>
<path d="M340.00 544.6 l4.1 6.9 h-8.200z" fill="#ffee00" stroke="#f51010" stroke-width="1.2" stroke-linejoin="miter"/>
<path d="M405.00 544.6 l4.1 6.9 h-8.200z" fill="#ffee00" stroke="#f51010" stroke-width="1.2" stroke-linejoin="miter"/>
<path d="M478.00 544.6 l4.1 6.9 h-8.200z" fill="#ffee00" stroke="#f51010" stroke-width="1.2" stroke-linejoin="miter"/>
<path d="M492.00 544.6 l4.1 6.9 h-8.200z" fill="#ffee00" stroke="#f51010" stroke-width="1.2" stroke-linejoin="miter"/>
<path d="M543.00 544.6 l4.1 6.9 h-8.200z" fill="#ffee00" stroke="#f51010" stroke-width="1.2" stroke-linejoin="miter"/>
<path d="M615.75 544.6 l4.1 6.9 h-8.200z" fill="#ffee00" stroke="#f51010" stroke-width="1.2" stroke-linejoin="miter"/>
<path d="M631.75 544.6 l4.1 6.9 h-8.200z" fill="#ffee00" stroke="#f51010" stroke-width="1.2" stroke-linejoin="miter"/>
<path d="M683.75 544.6 l4.1 6.9 h-8.200z" fill="#ffee00" stroke="#f51010" stroke-width="1.2" stroke-linejoin="miter"/>
<path d="M754.00 544.6 l4.1 6.9 h-8.200z" fill="#ffee00" stroke="#f51010" stroke-width="1.2" stroke-linejoin="miter"/>
<path d="M773.00 544.6 l4.1 6.9 h-8.200z" fill="#ffee00" stroke="#f51010" stroke-width="1.2" stroke-linejoin="miter"/>
<path d="M822.00 544.6 l4.1 6.9 h-8.200z" fill="#ffee00" stroke="#f51010" stroke-width="1.2" stroke-linejoin="miter"/>
<path d="M889.00 544.6 l4.1 6.9 h-8.200z" fill="#ffee00" stroke="#f51010" stroke-width="1.2" stroke-linejoin="miter"/>
<path d="M956.50 544.6 l4.1 6.9 h-8.200z" fill="#ffee00" stroke="#f51010" stroke-width="1.2" stroke-linejoin="miter"/>
<path d="M1022.00 544.6 l4.1 6.9 h-8.200z" fill="#ffee00" stroke="#f51010" stroke-width="1.2" stroke-linejoin="miter"/>
<path d="M1092.00 544.6 l4.1 6.9 h-8.200z" fill="#ffee00" stroke="#f51010" stroke-width="1.2" stroke-linejoin="miter"/>
<path d="M1162.25 544.6 l4.1 6.9 h-8.200z" fill="#ffee00" stroke="#f51010" stroke-width="1.2" stroke-linejoin="miter"/>
<path d="M1232.75 544.6 l4.1 6.9 h-8.200z" fill="#ffee00" stroke="#f51010" stroke-width="1.2" stroke-linejoin="miter"/>
<path d="M1303.00 544.6 l4.1 6.9 h-8.200z" fill="#ffee00" stroke="#f51010" stroke-width="1.2" stroke-linejoin="miter"/>
<path d="M1369.75 544.6 l4.1 6.9 h-8.200z" fill="#ffee00" stroke="#f51010" stroke-width="1.2" stroke-linejoin="miter"/>
<path d="M1437.50 544.6 l4.1 6.9 h-8.200z" fill="#ffee00" stroke="#f51010" stroke-width="1.2" stroke-linejoin="miter"/>
<path d="M1451.75 544.6 l4.1 6.9 h-8.200z" fill="#ffee00" stroke="#f51010" stroke-width="1.2" stroke-linejoin="miter"/>
<path d="M1509.25 544.6 l4.1 6.9 h-8.200z" fill="#ffee00" stroke="#f51010" stroke-width="1.2" stroke-linejoin="miter"/>
<path d="M1575.75 544.6 l4.1 6.9 h-8.200z" fill="#ffee00" stroke="#f51010" stroke-width="1.2" stroke-linejoin="miter"/>
<path d="M1645.75 544.6 l4.1 6.9 h-8.200z" fill="#ffee00" stroke="#f51010" stroke-width="1.2" stroke-linejoin="miter"/>

<defs>
<filter id="ds" x="-10%" y="-10%" width="130%" height="130%"><feDropShadow dx="0.4" dy="0.9" stdDeviation="1" flood-color="#000" flood-opacity="0.55"/></filter>
<filter id="ts" x="-5%" y="-10%" width="115%" height="130%"><feDropShadow dx="1.100" dy="1.100" stdDeviation="0.350" flood-color="#111" flood-opacity="0.8"/></filter>
<filter id="es" x="-10%" y="-10%" width="130%" height="130%"><feDropShadow dx="0.6" dy="0.6" stdDeviation="0.4" flood-color="#777" flood-opacity="0.9"/></filter>
</defs>
<g filter="url(#es)" font-family="Noto Serif CJK SC, Noto Sans CJK SC, serif">
<text x="939.500" y="525.800" font-size="17.500" font-weight="900" fill="#e2e2e6" textLength="65" lengthAdjust="spacingAndGlyphs">理杏仁</text>
</g>
<line x1="939" y1="530.500" x2="1004.500" y2="530.500" stroke="#8f8580" stroke-width="1"/>
<text x="939.300" y="540.800" font-family="DejaVu Sans, Liberation Sans, sans-serif" font-size="10.200" fill="#3496f0" stroke="#3496f0" stroke-width="0.250" textLength="65" lengthAdjust="spacingAndGlyphs">lixinger.com</text>
<g filter="url(#ds)">
<path d="M1423.5 504.5c-12.800 0-23.300 8.300-23.300 18.800 0 6 3.400 11.200 8.700 14.700l-2.700 8 9.300-4.800c2.500.7 5.200 1 8 1 12.800 0 23.300-8.400 23.300-18.900s-10.500-18.800-23.300-18.800z" fill="#fff"/>
</g>
<g filter="url(#ds)">
<path d="M1445 521c-11.400 0-20.600 7.600-20.600 17s9.200 17 20.600 17c2.300 0 4.600-.3 6.700-.9l8.200 4.300-2.400-7.100c4.900-3.100 8-7.900 8-13.300 0-9.400-9.200-17-20.500-17z" fill="#fff"/>
</g>
<g fill="#fff" stroke="#9a9a9a" stroke-width="1.100">
<circle cx="1414.300" cy="517.300" r="2.500"/><circle cx="1432.500" cy="516.800" r="2.500"/>
<circle cx="1437.500" cy="533.700" r="2.200"/><circle cx="1451.800" cy="533.700" r="2.200"/>
</g>
<path d="M1437.800 544.600l4.100 6.900h-8.200z M1451.800 544.600l4.100 6.900h-8.200z" fill="#fff6dc" stroke="#fcdcd8" stroke-width="1.200"/>
<text x="1474.500" y="548" font-family="Noto Sans CJK SC, sans-serif" font-size="41" font-weight="400" fill="#fff" filter="url(#ts)" textLength="165.500" lengthAdjust="spacingAndGlyphs">力哥理财</text>

</svg>
</body></html>
